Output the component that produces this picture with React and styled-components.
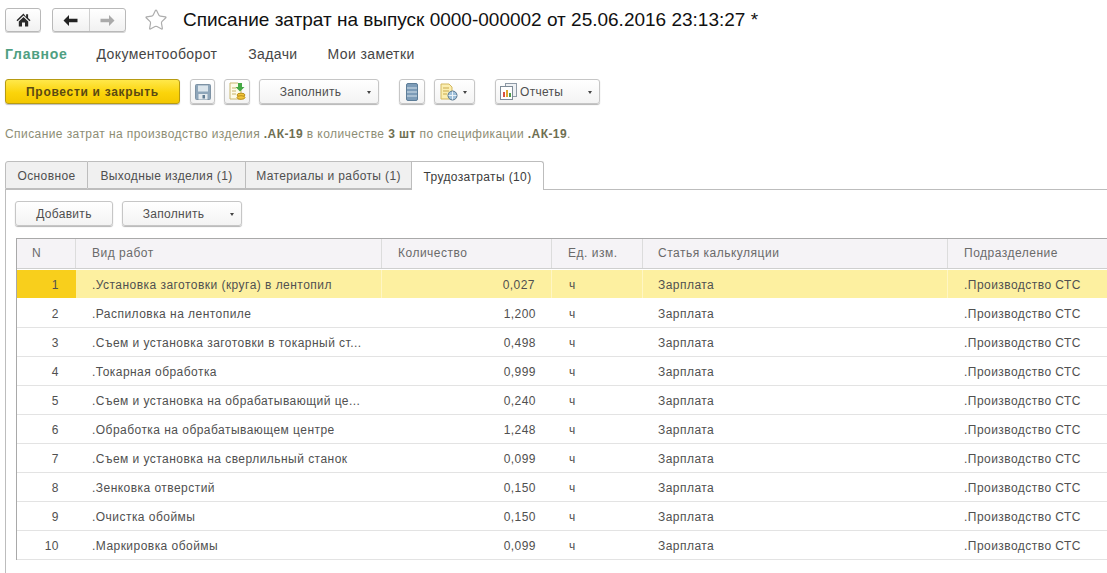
import React from 'react'
import styled, { createGlobalStyle } from 'styled-components'
import { Star } from 'lucide-react'

const GlobalStyle = createGlobalStyle`
  html, body { margin: 0; padding: 0; background: #fff; overflow: hidden; }
  body { font-family: "Liberation Sans", Arial, sans-serif; color: #4a4a4a; }
`

const Page = styled.div`
  width: 1107px;
  height: 573px;
  overflow: hidden;
  padding: 8px 0 0 5px;
  box-sizing: border-box;
`

const TitleRow = styled.div`
  display: flex;
  align-items: center;
  height: 24px;
`

const NavButton = styled.div`
  display: flex;
  align-items: center;
  justify-content: center;
  box-sizing: border-box;
  width: ${p => p.$w}px;
  height: 24px;
  margin-right: ${p => p.$mr || 0}px;
  border: 1px solid #b9b9b9;
  border-radius: 3px;
  background: linear-gradient(#fff, #f1f1f1);
  box-shadow: 0 1px 0 #d4d4d4;
`

const NavPart = styled.div`
  flex: 1;
  height: 100%;
  display: flex;
  align-items: center;
  justify-content: center;
  & + & { border-left: 1px solid #cfcfcf; }
`

const Title = styled.h1`
  margin: 0 0 0 15px;
  font-size: 19px;
  font-weight: 400;
  color: #111;
  white-space: nowrap;
`

const Menu = styled.nav`
  display: flex;
  align-items: center;
  height: 20px;
  margin-top: 12px;
  font-size: 14px;
  letter-spacing: 0.38px;
  color: #454545;
`

const MenuItem = styled.span`
  margin-left: ${p => p.$ml}px;
  font-weight: ${p => (p.$active ? 700 : 400)};
  letter-spacing: ${p => (p.$active ? '0.75px' : 'inherit')};
  color: ${p => (p.$active ? '#4f9f82' : 'inherit')};
`

const Toolbar = styled.div`
  display: flex;
  align-items: center;
  height: 25px;
  margin-top: 15px;
`

const PrimaryButton = styled.div`
  display: flex;
  align-items: center;
  justify-content: center;
  box-sizing: border-box;
  width: 175px;
  height: 25px;
  margin-right: 10px;
  border: 1px solid #b79b12;
  border-radius: 3px;
  background: linear-gradient(#ffe84a, #fbd40b 55%, #f4c800);
  box-shadow: 0 1px 1px #bdbdbd;
  font-size: 12px;
  font-weight: 700;
  letter-spacing: 0.7px;
  color: #5b4a12;
`

const Button = styled.div`
  display: flex;
  align-items: center;
  position: relative;
  box-sizing: border-box;
  justify-content: ${p => (p.$left ? 'flex-start' : 'center')};
  width: ${p => p.$w}px;
  height: 25px;
  margin-right: ${p => p.$mr || 0}px;
  padding: ${p => p.$pad || '0'};
  border: 1px solid #c6c6c6;
  border-radius: 3px;
  background: linear-gradient(#fff, #f3f3f3);
  box-shadow: 0 1px 1px #b5b5b5;
  font-size: 12px;
  letter-spacing: 0.3px;
  color: #4f4f4f;
`

const ButtonLabel = styled.span`
  margin-left: 3px;
`

const Caret = styled.i`
  position: absolute;
  right: ${p => p.$right || 7}px;
  top: 11px;
  width: 0;
  height: 0;
  border-left: 2.5px solid transparent;
  border-right: 2.5px solid transparent;
  border-top: 3px solid #444;
`

const Info = styled.div`
  margin-top: 23px;
  height: 15px;
  line-height: 15px;
  font-size: 12px;
  letter-spacing: 0.42px;
  color: #8d8d74;
  white-space: nowrap;
  b { color: #6f6f52; }
`

const Tabs = styled.div`
  display: flex;
  align-items: flex-end;
  height: 29px;
  margin-top: 18px;
`

const Tab = styled.div`
  display: flex;
  align-items: center;
  justify-content: center;
  box-sizing: border-box;
  width: ${p => p.$w}px;
  height: ${p => (p.$active ? 29 : 28)}px;
  padding-top: 2px;
  margin-bottom: ${p => (p.$active ? -1 : 0)}px;
  position: relative;
  z-index: ${p => (p.$active ? 1 : 0)};
  border: 1px solid #bdbdbd;
  border-left-width: ${p => (p.$first ? 1 : 0)}px;
  border-bottom: ${p => (p.$active ? 'none' : '1px solid #bdbdbd')};
  border-radius: ${p => (p.$first ? '3px 0 0 0' : p.$active ? '0 3px 0 0' : '0')};
  background: ${p => (p.$active ? '#fff' : '#f0f0f0')};
  font-size: 12px;
  letter-spacing: 0.38px;
  color: ${p => (p.$active ? '#3c3c3c' : '#4f4f4f')};
`

const Panel = styled.section`
  border-top: 1px solid #bdbdbd;
  border-left: 1px solid #bdbdbd;
  padding: 11px 0 0 9px;
  height: 400px;
  box-sizing: border-box;
`

const PanelBar = styled.div`
  display: flex;
  height: 25px;
  margin-bottom: 12px;
`

const Grid = styled.div`
  margin-left: 1px;
  width: 1100px;
  border-top: 1px solid #a9a9a9;
  border-left: 1px solid #a9a9a9;
`

const cols = '59px 306px 170px 91px 305px 1fr'

const HeadRow = styled.div`
  display: grid;
  grid-template-columns: ${cols};
  box-sizing: border-box;
  height: 30px;
  background: #f5f3f6;
  border-bottom: 1px solid #cfcfcf;
`

const HeadCell = styled.div`
  display: flex;
  align-items: center;
  padding: 0 0 2px ${p => p.$pl ?? 16}px;
  border-right: 1px solid #dcdcdc;
  font-size: 12px;
  letter-spacing: 0.5px;
  color: #6a6a6a;
`

const Row = styled.div`
  display: grid;
  grid-template-columns: ${cols};
  box-sizing: border-box;
  height: 29px;
  margin-top: ${p => (p.$first ? 1 : 0)}px;
  background: ${p => (p.$active ? '#fdf0a0' : '#fff')};
  border-bottom: ${p => (p.$active ? '1px solid #fff' : '1px solid #e3e3e3')};
  box-shadow: ${p => (p.$active ? '0 1px 0 #e3e3e3' : 'none')};
`

const Cell = styled.div`
  display: flex;
  align-items: center;
  justify-content: ${p => (p.$right ? 'flex-end' : 'flex-start')};
  padding: ${p => (p.$right ? `2px ${p.$pr}px 0 0` : `2px 0 0 ${p.$pl ?? 15}px`)};
  overflow: hidden;
  white-space: nowrap;
  background: ${p => (p.$marker ? '#f8cf1c' : 'transparent')};
  border-right: ${p => (p.$active ? '1px solid #fff6c4' : 'none')};
  font-size: 12px;
  letter-spacing: 0.46px;
  color: #505050;
`

const rows = [
  ['.Установка заготовки (круга) в лентопил', '0,027'],
  ['.Распиловка на лентопиле', '1,200'],
  ['.Съем и установка заготовки в токарный ст...', '0,498'],
  ['.Токарная обработка', '0,999'],
  ['.Съем и установка на обрабатывающий це...', '0,240'],
  ['.Обработка на обрабатывающем центре', '1,248'],
  ['.Съем и установка на сверлильный станок', '0,099'],
  ['.Зенковка отверстий', '0,150'],
  ['.Очистка обоймы', '0,150'],
  ['.Маркировка обоймы', '0,099'],
]

function HomeIcon () {
  return (
    <svg width="15" height="14" viewBox="0 0 15 14">
      <path d="M7.5 0.5L0.5 7.2l1 1L7.5 2.6l6 5.6 1-1-2.4-2.3V1.2h-2v2.8z" fill="#2a2a2a" />
      <path d="M2.8 8.4L7.5 4l4.7 4.4V13.5H9V9.5H6v4H2.8z" fill="#2a2a2a" />
    </svg>
  )
}

function NavArrow ({ color, flip }) {
  return (
    <svg width="15" height="11" viewBox="0 0 15 11" style={flip ? { transform: 'scaleX(-1)' } : undefined}>
      <path d="M6 0L0.5 5.5 6 11V7.2h8.5V3.8H6z" fill={color} />
    </svg>
  )
}

function SaveIcon () {
  return (
    <svg width="16" height="16" viewBox="0 0 16 16">
      <rect x="0.5" y="0.5" width="15" height="15" rx="1" fill="#8ea6ba" stroke="#7d92a4" />
      <rect x="3" y="1.5" width="10" height="6" fill="#dbe5ec" />
      <rect x="3.5" y="10" width="9" height="5.5" fill="#e4eaee" />
      <rect x="7.5" y="11" width="2.5" height="3.5" fill="#5f7b92" />
    </svg>
  )
}

function DocMoneyIcon () {
  return (
    <svg width="18" height="19" viewBox="0 0 18 19">
      <path d="M2 1h8l3 3v13H2z" fill="#fdfbe8" stroke="#c9b873" />
      <path d="M4 6h4M4 9h4M4 12h4" stroke="#c8b36a" />
      <path d="M10 1h4v4h2.5L12 9.5 7.5 5H10z" fill="#45a845" />
      <ellipse cx="13" cy="13" rx="4" ry="1.8" fill="#f3c63a" stroke="#b98f1a" />
      <ellipse cx="13" cy="15.5" rx="4" ry="1.8" fill="#f3c63a" stroke="#b98f1a" />
    </svg>
  )
}

function StackIcon () {
  return (
    <svg width="12" height="18" viewBox="0 0 12 18">
      <rect x="0.5" y="0.5" width="11" height="17" rx="1.5" fill="#7d9cb8" stroke="#5d7d98" />
      <path d="M1 5h10M1 9h10M1 13h10" stroke="#d6e2ec" />
    </svg>
  )
}

function DocGlobeIcon () {
  return (
    <svg width="18" height="18" viewBox="0 0 18 18">
      <path d="M1 1h8l3 3v12H1z" fill="#fbeeb0" stroke="#d3b75e" />
      <path d="M3 5h6M3 8h6M3 11h4" stroke="#c9a94c" />
      <circle cx="12.5" cy="12.5" r="4.5" fill="#9fc0da" stroke="#56748c" />
      <path d="M8.5 12.5h8M12.5 8.5v8" stroke="#e9f1f7" />
    </svg>
  )
}

function ReportIcon () {
  return (
    <svg width="17" height="17" viewBox="0 0 17 17">
      <rect x="5.5" y="0.5" width="11" height="13" fill="#eef1f4" stroke="#8e9aa6" />
      <rect x="0.5" y="3.5" width="12" height="13" fill="#fff" stroke="#7e8b97" />
      <rect x="3" y="9" width="2" height="5" fill="#d8503f" />
      <rect x="6" y="7" width="2" height="7" fill="#e0a72e" />
      <rect x="9" y="10" width="2" height="4" fill="#4d9a4d" />
    </svg>
  )
}

export default function App () {
  return (
    <Page>
      <GlobalStyle />
      <TitleRow>
        <NavButton $w={36} $mr={11}>
          <HomeIcon />
        </NavButton>
        <NavButton $w={74} $mr={18}>
          <NavPart><NavArrow color="#222" /></NavPart>
          <NavPart><NavArrow color="#aaa" flip /></NavPart>
        </NavButton>
        <Star size={24} color="#adadad" strokeWidth={1.2} />
        <Title>Списание затрат на выпуск 0000-000002 от 25.06.2016 23:13:27 *</Title>
      </TitleRow>

      <Menu>
        <MenuItem $active $ml={0}>Главное</MenuItem>
        <MenuItem $ml={29}>Документооборот</MenuItem>
        <MenuItem $ml={31}>Задачи</MenuItem>
        <MenuItem $ml={30}>Мои заметки</MenuItem>
      </Menu>

      <Toolbar>
        <PrimaryButton>Провести и закрыть</PrimaryButton>
        <Button $w={25} $mr={9}><SaveIcon /></Button>
        <Button $w={26} $mr={9}><DocMoneyIcon /></Button>
        <Button $w={120} $mr={20} $pad="0 17px 0 0">Заполнить<Caret /></Button>
        <Button $w={26} $mr={9}><StackIcon /></Button>
        <Button $w={41} $mr={20} $left $pad="0 0 0 5px"><DocGlobeIcon /><Caret /></Button>
        <Button $w={105} $left $pad="0 0 0 4px"><ReportIcon /><ButtonLabel>Отчеты</ButtonLabel><Caret /></Button>
      </Toolbar>

      <Info>
        Списание затрат на производство изделия <b>.АК-19</b> в количестве <b>3 шт</b> по спецификации <b>.АК-19</b>.
      </Info>

      <Tabs>
        <Tab $first $w={83}>Основное</Tab>
        <Tab $w={158}>Выходные изделия (1)</Tab>
        <Tab $w={166}>Материалы и работы (1)</Tab>
        <Tab $active $w={132}>Трудозатраты (10)</Tab>
      </Tabs>

      <Panel>
        <PanelBar>
          <Button $w={98} $mr={9}>Добавить</Button>
          <Button $w={120} $pad="0 17px 0 0">Заполнить<Caret /></Button>
        </PanelBar>
        <Grid>
          <HeadRow>
            <HeadCell $pl={15}>N</HeadCell>
            <HeadCell>Вид работ</HeadCell>
            <HeadCell>Количество</HeadCell>
            <HeadCell>Ед. изм.</HeadCell>
            <HeadCell $pl={15}>Статья калькуляции</HeadCell>
            <HeadCell>Подразделение</HeadCell>
          </HeadRow>
          {rows.map(([name, qty], i) => (
            <Row key={i} $first={i === 0} $active={i === 0}>
              <Cell $right $pr={17} $marker={i === 0}>{i + 1}</Cell>
              <Cell $pl={16} $active={i === 0}>{name}</Cell>
              <Cell $right $pr={16} $active={i === 0}>{qty}</Cell>
              <Cell $pl={17} $active={i === 0}>ч</Cell>
              <Cell $active={i === 0}>Зарплата</Cell>
              <Cell $pl={16}>.Производство СТС</Cell>
            </Row>
          ))}
        </Grid>
      </Panel>
    </Page>
  )
}
